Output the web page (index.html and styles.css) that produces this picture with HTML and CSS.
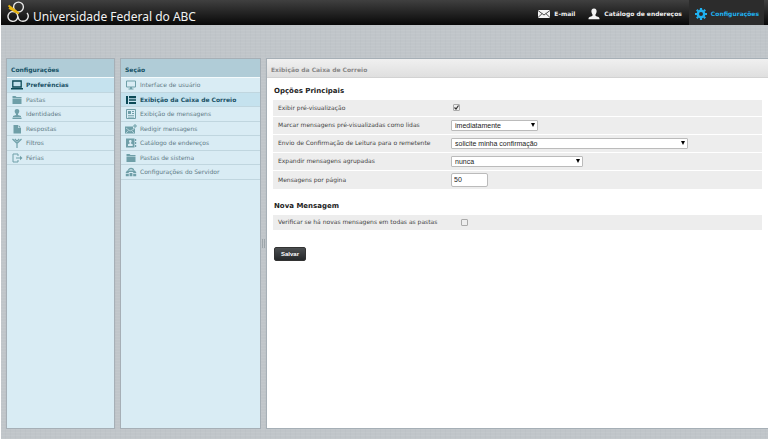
FILE: index.html
```html
<!DOCTYPE html>
<html lang="pt-BR">
<head>
<meta charset="utf-8">
<title>Configurações</title>
<link rel="stylesheet" href="styles.css">
</head>
<body>
<header class="topbar">
  <a class="brand" href="#">
    <svg class="logo" width="23" height="23" viewBox="0 0 23 23" fill="none" stroke="#e8e8e8" stroke-width="1.4">
      <circle cx="11.500" cy="6" r="4.900"/>
      <path d="M8 11a4.900 4.900 0 1 0 2.800 4.500c0-1.800-.8-3-2.200-4"/>
      <path d="M11 15.500c.3 2.800 2.200 4.800 5 4.800 3 0 5.300-2.400 5.300-5.300 0-1.300-.5-2.200-1.300-3"/>
      <path d="M1.500 4.500L12 12.500M2 7l9.500 5.500" stroke="#e9b50f" stroke-width="2"/>
    </svg>
    <span>Universidade Federal do ABC</span>
  </a>
  <nav class="tasks">
    <a href="#"><svg width="12" height="8" viewBox="0 0 12 8"><rect width="12" height="8" fill="#f4f4f4"/><path d="M0 .5l6 4.500 6-4.500M0 7.500l4.200-4M12 7.500l-4.200-4" fill="none" stroke="#222" stroke-width=".8"/></svg>E-mail</a>
    <a href="#"><svg width="12" height="12" viewBox="0 0 12 12" fill="#f4f4f4"><path d="M6 .5c2 0 2.800 1.500 2.600 3.300C8.400 5.500 7.500 6.300 7.300 7c0 1 1 1.200 2.700 1.800 1.300.5 1.500 1.200 1.500 2.400H.5c0-1.200.2-1.900 1.500-2.400C3.700 8.200 4.700 8 4.700 7c-.2-.7-1.100-1.500-1.300-3.200C3.200 2 4 .5 6 .5z"/></svg>Catálogo de endereços</a>
    <a href="#" class="current"><svg width="12" height="12" viewBox="0 0 12 12" fill="none" stroke="#20b1f0"><circle cx="6" cy="6" r="3.200" stroke-width="2.400"/><path d="M6 0v2M6 10v2M0 6h2M10 6h2M1.800 1.800l1.400 1.400M8.800 8.800l1.400 1.400M1.800 10.200l1.400-1.400M8.800 3.200l1.400-1.400" stroke-width="2.200"/></svg>Configurações</a>
  </nav>
</header>
<main class="screen">
  <nav class="panel side">
    <h2>Configurações</h2>
    <ul>
      <li class="selected"><a href="#"><svg width="12" height="10" viewBox="0 0 12 10"><path d="M1.800 1h8.400v6H1.800z" fill="none" stroke="currentColor" stroke-width="1.300"/><path d="M0 8h12v1.500H0z"/></svg>Preferências</a></li>
      <li><a href="#"><svg width="12" height="10" viewBox="0 0 12 10"><path d="M1.500 1h3l1 1h5v1.200h-9zM1.500 3.700h9V9h-9z"/></svg>Pastas</a></li>
      <li><a href="#"><svg width="12" height="10" viewBox="0 0 12 10"><path d="M6 0c3 0 2.800 3.500 1 5v1l3 1v1H2V7l3-1V5C3.200 3.500 3 0 6 0zM1.500 8.500h9V10h-9z"/></svg>Identidades</a></li>
      <li><a href="#"><svg width="12" height="10" viewBox="0 0 12 10"><path d="M2.500 1H7v3h3v5.500H2.500zM7.600 1L10 3.400H7.600z"/></svg>Respostas</a></li>
      <li><a href="#"><svg width="12" height="10" viewBox="0 0 12 10"><path d="M1.500 1L6 5.500 10.500 1M6 5v5M3.800 1L6 3.200 8.200 1" fill="none" stroke="currentColor" stroke-width="1.200"/></svg>Filtros</a></li>
      <li><a href="#"><svg width="12" height="10" viewBox="0 0 12 10"><path d="M7 3V1H2v8h5V7" fill="none" stroke="currentColor"/><path d="M5 4.400h4V2.800L11.500 5 9 7.200V5.600H5z"/></svg>Férias</a></li>
    </ul>
  </nav>
  <nav class="panel sections">
    <h2>Seção</h2>
    <ul>
      <li><a href="#"><svg width="12" height="10" viewBox="0 0 12 10"><path d="M1.500 1h9v6h-9z" fill="none" stroke="currentColor"/><path d="M5 7h2v1.500h1.500v1h-5v-1H5z"/></svg>Interface de usuário</a></li>
      <li class="selected"><a href="#"><svg width="12" height="10" viewBox="0 0 12 10"><path d="M1 1h2v8H1zM4 1h7v2.300H4zM4 4.300h7v1.500H4zM4 7h7v2H4z"/></svg>Exibição da Caixa de Correio</a></li>
      <li><a href="#"><svg width="12" height="10" viewBox="0 0 12 10"><path d="M1.500.5h9v9h-9z" fill="none" stroke="currentColor"/><path d="M3 2h3v3H3zM7 2h2v1H7zM7 4h2v1H7zM3 6h6v.8H3zM3 7.700h6v.8H3z"/></svg>Exibição de mensagens</a></li>
      <li><a href="#"><svg width="12" height="10" viewBox="0 0 12 10"><path d="M0 2.500h8v2h2V9.500H0zM9.500 0h1v1.500H12v1h-1.500V4h-1V2.500H8v-1h1.500z"/><path d="M1 4L5 7l4-2M1 9l2.500-2.500M9 9L6.500 6.500" fill="none" stroke="#d9ecf4" stroke-width=".6"/></svg>Redigir mensagens</a></li>
      <li><a href="#"><svg width="12" height="10" viewBox="0 0 12 10"><path d="M1 .5h8.500v9H1zM10 1h1.200v2H10zM10 4h1.200v2H10zM10 7h1.200v2H10z"/><path d="M5.300 2c1.800 0 1.500 2.200.6 2.800v.7l1.800.8V8H3V6.300l1.700-.8v-.7C3.700 4.200 3.500 2 5.300 2z" fill="#d9ecf4"/></svg>Catálogo de endereços</a></li>
      <li><a href="#"><svg width="12" height="10" viewBox="0 0 12 10"><path d="M1.500 1h3l1 1h5v1.200h-9zM1.500 3.700h9V9h-9z"/></svg>Pastas de sistema</a></li>
      <li><a href="#"><svg width="12" height="10" viewBox="0 0 12 10"><path d="M3.500 3.500C3.500.8 8.500.8 8.500 3.500" fill="none" stroke="currentColor" stroke-width="1.300"/><path d="M2 3.500h8L11.500 6H8.200V5H3.800v1H.5zM.8 6.700h3v2.500h-3zM4.600 6h2.800v3.200H4.600zM8.200 6.700h3v2.500h-3z"/></svg>Configurações do Servidor</a></li>
    </ul>
  </nav>
  <div class="splitter"></div>
  <section class="panel content">
    <h1>Exibição da Caixa de Correio</h1>
    <form>
      <fieldset>
        <legend>Opções Principais</legend>
        <table class="wide">
          <tr class="short"><th><label for="preview">Exibir pré-visualização</label></th><td><input type="checkbox" id="preview" checked></td></tr>
          <tr><th><label for="mark">Marcar mensagens pré-visualizadas como lidas</label></th><td><select id="mark" class="small"><option>imediatamente</option></select></td></tr>
          <tr><th><label for="mdn">Envio de Confirmação de Leitura para o remetente</label></th><td><select id="mdn" class="large"><option>solicite minha confirmação</option></select></td></tr>
          <tr><th><label for="expand">Expandir mensagens agrupadas</label></th><td><select id="expand" class="medium"><option>nunca</option></select></td></tr>
          <tr class="tall"><th><label for="size">Mensagens por página</label></th><td><input type="text" id="size" value="50"></td></tr>
        </table>
      </fieldset>
      <fieldset>
        <legend>Nova Mensagem</legend>
        <table class="narrow">
          <tr class="short"><th><label for="all">Verificar se há novas mensagens em todas as pastas</label></th><td><input type="checkbox" id="all"></td></tr>
        </table>
      </fieldset>
      <button type="button">Salvar</button>
    </form>
  </section>
</main>
</body>
</html>
```
FILE: styles.css
```css
* { box-sizing: border-box; }
body {
  margin: 0;
  min-height: 100vh;
  display: flex;
  flex-direction: column;
  border-left: 1px solid #fff;
  font: 6px/8px "DejaVu Sans", sans-serif;
  color: #444;
  background:
    repeating-linear-gradient(0deg, rgba(255,255,255,.05) 0 1px, transparent 1px 3px),
    repeating-linear-gradient(90deg, rgba(90,100,110,.03) 0 1px, transparent 1px 5px),
    #c0c5c9;
}
a { color: inherit; text-decoration: none; }
h1, h2, ul { margin: 0; padding: 0; list-style: none; }

.topbar {
  height: 25px;
  display: flex;
  justify-content: space-between;
  background: linear-gradient(#404040, #080808);
}
.brand {
  display: flex;
  gap: 3px;
  padding: 1px 0 0 6px;
  font-family: "Noto Sans", sans-serif;
  font-size: 12px;
  color: #f2f2f2;
}
.brand span { padding-top: 7px; line-height: 18px; }
.tasks { display: flex; padding-right: 4px; }
.tasks a {
  display: flex;
  align-items: center;
  gap: 4px;
  padding: 2px 5px 0 6px;
  margin-left: 2px;
  font-weight: bold;
  color: #eee;
}
.tasks .current { color: #20b1f0; background: #2c2c2c; }

.screen {
  flex: 1;
  display: flex;
  padding: 33px 0 10px 5px;
}
.panel {
  border: 1px solid #a6afb6;
  background: #d9ecf4;
}
.side { flex: 0 0 109px; margin-right: 5px; }
.sections { flex: 0 0 141px; }
.panel h1, .panel h2 {
  height: 19px;
  padding-left: 4px;
  font-size: 6px;
  line-height: 21px;
}
.panel h2 { color: #175266; background: #b0ccd7; border-bottom: 1px solid #f4fafc; }
.panel li { height: 14px; border-bottom: 1px solid #c0d6df; }
.panel li:nth-child(odd) { height: 15px; }
.panel li a {
  display: flex;
  align-items: center;
  gap: 3px;
  height: 100%;
  padding-left: 4px;
  color: #5f7b86;
}
.panel li svg { color: #6f9fa8; fill: currentColor; }
.panel .selected { background: #c5e2ee; }
.panel .selected a { font-weight: bold; color: #1b5266; }
.panel .selected svg { color: #0c4a57; }
.splitter {
  flex: 0 0 3px;
  align-self: center;
  height: 9px;
  margin: 0 1px;
  border: solid #9da5aa;
  border-width: 0 1px;
}

.content { flex: 1; min-width: 0; background: #fff; border-right: 0; }
.content h1 {
  color: #888;
  background: linear-gradient(#f0f0f0, #dfdfdf);
  border-bottom: 1px solid #d2d2d2;
}
form { padding: 7px 6px 0; }
fieldset { margin: 0 0 10px; padding: 0; border: 0; }
legend {
  padding: 0 1px;
  font-size: 7px;
  line-height: 12px;
  font-weight: bold;
  color: #222;
}
table {
  width: 100%;
  margin-top: 3px;
  border-collapse: collapse;
  table-layout: fixed;
}
tr { height: 18px; border-bottom: 1px solid #fff; background: #ededed; }
.short { height: 16px; }
.tall { height: 19px; }
th { width: 178px; padding: 0 0 0 5px; text-align: left; font-weight: normal; }
.narrow th { width: 186px; }
td { padding: 0; }
td > * { display: block; }
input, select, button { margin: 0; font: 7px/9px "Liberation Sans", sans-serif; color: #222; }
input[type="checkbox"] {
  appearance: none;
  width: 7px;
  height: 7px;
  margin-left: 2px;
  border: 1px solid #aaa;
  border-radius: 1px;
  background: #eee;
}
input[type="checkbox"]:checked {
  background: #eee url("data:image/svg+xml,%3Csvg xmlns='http://www.w3.org/2000/svg' viewBox='0 0 5 5'%3E%3Cpath d='M.5 2.500L2 4 4.500.5' fill='none' stroke='%23333' stroke-width='1.200'/%3E%3C/svg%3E") center / 5px 5px no-repeat;
}
select {
  appearance: none;
  height: 11px;
  padding: 0 3px;
  border: 1px solid #bbb;
  border-radius: 1px;
  background: #fff url("data:image/svg+xml,%3Csvg xmlns='http://www.w3.org/2000/svg' viewBox='0 0 4 4'%3E%3Cpath d='M0 0h4L2 4z'/%3E%3C/svg%3E") right 2px center / 4px 4px no-repeat;
}
.small { width: 87px; }
.medium { width: 132px; }
.large { width: 237px; }
input[type="text"] {
  width: 37px;
  height: 14px;
  padding: 0 2px;
  border: 1px solid #bbb;
  border-radius: 2px;
  background: #fff;
}
button {
  height: 14px;
  margin: 6px 1px;
  padding: 0 6px;
  border: 1px solid #333;
  border-radius: 2px;
  background: linear-gradient(#4c4f51, #25282a);
  color: #fff;
  font: bold 6px/8px "Liberation Sans", sans-serif;
}
```
